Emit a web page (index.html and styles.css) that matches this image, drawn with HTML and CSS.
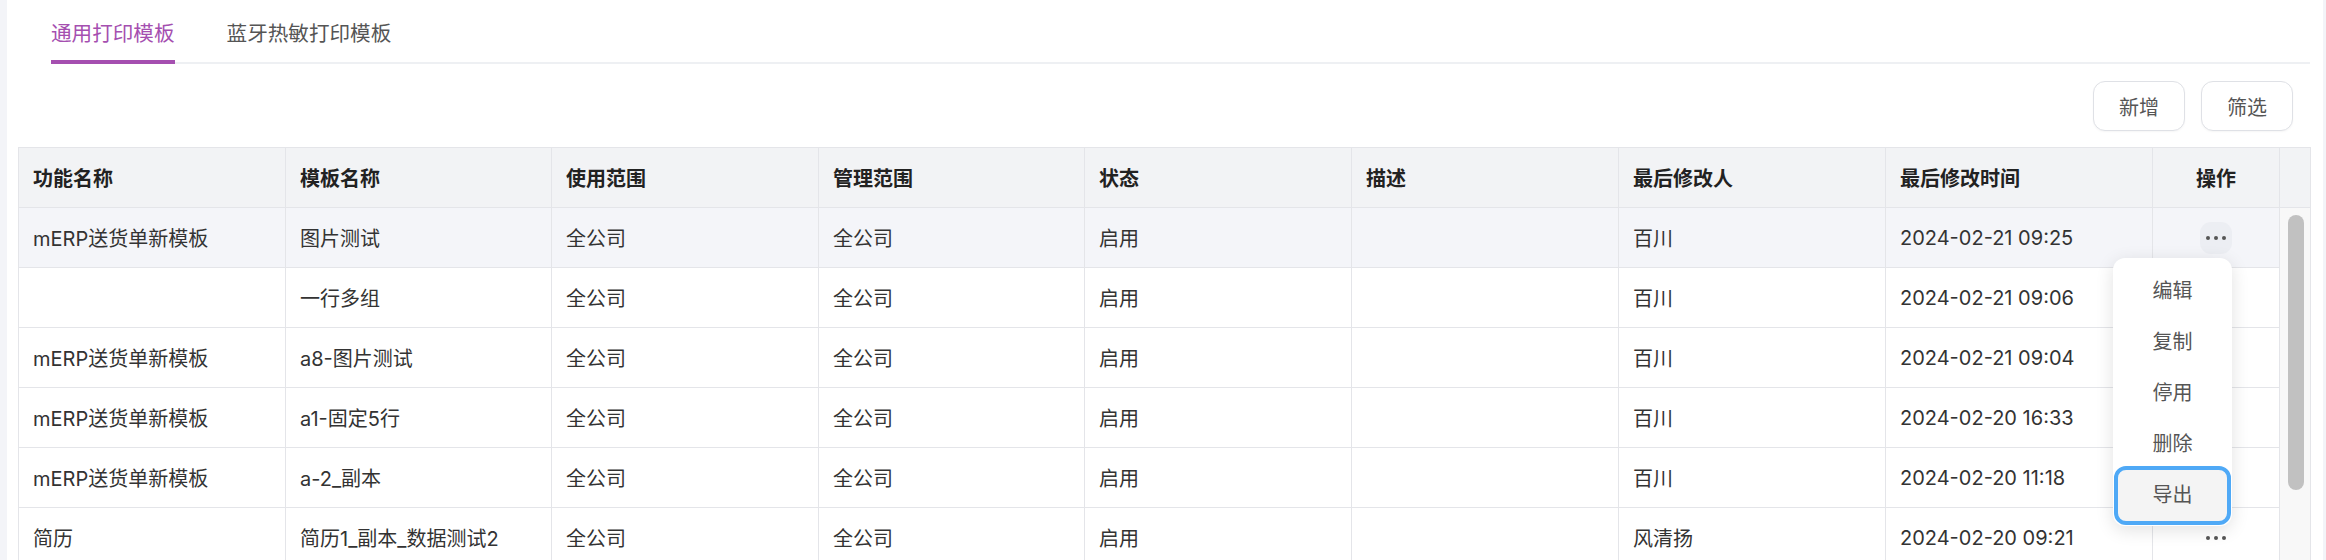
FILE: index.html
```html
<!DOCTYPE html>
<html lang="zh-CN">
<head>
    <meta charset="UTF-8">
    <title>打印模板</title>
    <link rel="stylesheet" href="styles.css">
</head>
<body>
<div class="page">
    <ul class="tabs">
        <li class="active">通用打印模板</li>
        <li>蓝牙热敏打印模板</li>
    </ul>

    <div class="toolbar">
        <button class="btn">新增</button>
        <button class="btn">筛选</button>
    </div>

    <div class="table-wrap">
        <table class="grid">
            <colgroup>
                <col style="width:267px">
                <col style="width:266px">
                <col style="width:267px">
                <col style="width:266px">
                <col style="width:267px">
                <col style="width:267px">
                <col style="width:267px">
                <col style="width:267px">
                <col style="width:127px">
                <col style="width:31px">
            </colgroup>
            <thead>
            <tr>
                <th>功能名称</th>
                <th>模板名称</th>
                <th>使用范围</th>
                <th>管理范围</th>
                <th>状态</th>
                <th>描述</th>
                <th>最后修改人</th>
                <th>最后修改时间</th>
                <th class="op">操作</th>
                <th class="gutter"></th>
            </tr>
            </thead>
            <tbody>
            <tr class="hover">
                <td>mERP送货单新模板</td>
                <td>图片测试</td>
                <td>全公司</td>
                <td>全公司</td>
                <td>启用</td>
                <td></td>
                <td>百川</td>
                <td>2024-02-21 09:25</td>
                <td class="op"><span class="more on"><i></i><i></i><i></i></span></td>
                <td class="gutter" rowspan="6"><div class="thumb"></div></td>
            </tr>
            <tr>
                <td></td>
                <td>一行多组</td>
                <td>全公司</td>
                <td>全公司</td>
                <td>启用</td>
                <td></td>
                <td>百川</td>
                <td>2024-02-21 09:06</td>
                <td class="op"><span class="more"><i></i><i></i><i></i></span></td>
            </tr>
            <tr>
                <td>mERP送货单新模板</td>
                <td>a8-图片测试</td>
                <td>全公司</td>
                <td>全公司</td>
                <td>启用</td>
                <td></td>
                <td>百川</td>
                <td>2024-02-21 09:04</td>
                <td class="op"><span class="more"><i></i><i></i><i></i></span></td>
            </tr>
            <tr>
                <td>mERP送货单新模板</td>
                <td>a1-固定5行</td>
                <td>全公司</td>
                <td>全公司</td>
                <td>启用</td>
                <td></td>
                <td>百川</td>
                <td>2024-02-20 16:33</td>
                <td class="op"><span class="more"><i></i><i></i><i></i></span></td>
            </tr>
            <tr>
                <td>mERP送货单新模板</td>
                <td>a-2_副本</td>
                <td>全公司</td>
                <td>全公司</td>
                <td>启用</td>
                <td></td>
                <td>百川</td>
                <td>2024-02-20 11:18</td>
                <td class="op"><span class="more"><i></i><i></i><i></i></span></td>
            </tr>
            <tr>
                <td>简历</td>
                <td>简历1_副本_数据测试2</td>
                <td>全公司</td>
                <td>全公司</td>
                <td>启用</td>
                <td></td>
                <td>风清扬</td>
                <td>2024-02-20 09:21</td>
                <td class="op"><span class="more"><i></i><i></i><i></i></span></td>
            </tr>
            </tbody>
        </table>

        <!-- 操作下拉菜单 -->
        <ul class="menu">
            <li>编辑</li>
            <li>复制</li>
            <li>停用</li>
            <li>删除</li>
            <li class="focus">导出</li>
        </ul>
    </div>
</div>
</body>
</html>
```

FILE: styles.css
```css
html, body, div, ul, li, table, th, td, button {
    margin: 0;
    padding: 0;
    font-family: "Inter", "Noto Sans CJK SC", sans-serif;
    font-size: 20px;
}

ul, li {
    list-style: none;
}

body {
    background: #f3f4f8;
    overflow: hidden;
}

.page {
    margin-left: 7px;
    width: 2316px;
    min-height: 560px;
    padding: 0 13px 0 11px;
    box-sizing: border-box;
    background: #fff;
}

/* 顶部标签 */
.tabs {
    display: flex;
    gap: 52px;
    margin-left: 33px;
    border-bottom: 2px solid #eef0f3;
}

.tabs li {
    padding: 20px 0 12px;
    line-height: 28px;
    font-size: 20.6px;
    color: #555;
    border-bottom: 4px solid transparent;
    margin-bottom: -2px;
}

.tabs li.active {
    color: #a54fb0;
    border-bottom-color: #a54fb0;
}

/* 按钮 */
.toolbar {
    display: flex;
    justify-content: flex-end;
    gap: 16px;
    padding: 17px 17px 16px 0;
}

.btn {
    height: 50px;
    padding: 0 25px;
    border: 1px solid #dfe1e6;
    border-radius: 12px;
    background: #fff;
    color: #555;
    box-shadow: 0 1px 2px rgba(0, 0, 0, .04);
}

/* 表格 */
.table-wrap {
    position: relative;
}

.grid {
    width: 2292px;
    table-layout: fixed;
    border-collapse: collapse;
    color: #333;
}

.grid th, .grid td {
    height: 59px;
    padding: 0 14px;
    border: 1px solid #e4e5e9;
    text-align: left;
    white-space: nowrap;
}

.grid th {
    background: #f2f3f5;
    color: #222;
    font-weight: 600;
}

.grid tr.hover td {
    background: #f4f5f9;
}

.grid .op {
    text-align: center;
    padding: 0;
}

.grid td.gutter {
    background: #f8f8f8 !important;
    vertical-align: top;
    padding: 7px 6px 0 8px;
}

.grid th.gutter {
    padding: 0;
}

.thumb {
    width: 16px;
    height: 275px;
    border-radius: 8px;
    background: #c1c1c1;
}

.more {
    display: inline-flex;
    align-items: center;
    justify-content: center;
    gap: 4px;
    width: 32px;
    height: 32px;
    border-radius: 11px;
    vertical-align: middle;
}

.more.on {
    background: #eceef3;
}

.more i {
    width: 4px;
    height: 4px;
    border-radius: 50%;
    background: #555;
}

/* 下拉菜单 */
.menu {
    position: absolute;
    left: 2095px;
    top: 111px;
    width: 119px;
    padding: 8px 5px 5px;
    box-sizing: border-box;
    background: #fff;
    border-radius: 12px;
    box-shadow: 0 4px 18px rgba(0, 0, 0, .12);
}

.menu li {
    height: 51px;
    line-height: 51px;
    text-align: center;
    color: #555;
    border-radius: 8px;
}

.menu li.focus {
    background: #f4f4f4;
    outline: 4px solid #4fa9f6;
}
```
